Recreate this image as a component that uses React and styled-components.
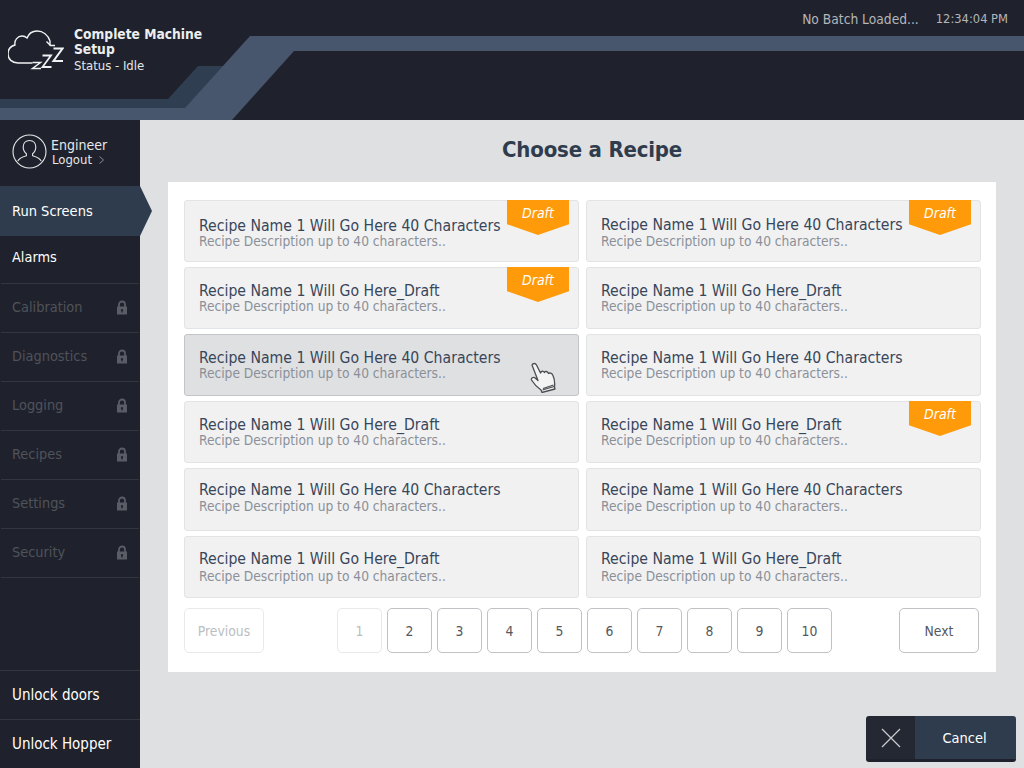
import React from 'react';
import styled, { createGlobalStyle } from 'styled-components';

const FONT = `"DejaVu Sans", sans-serif`;

const GlobalStyle = createGlobalStyle`
    html, body {
        margin: 0;
        padding: 0;
    }
    body {
        font-family: ${FONT};
        font-stretch: condensed;
        background: #dfe0e2;
    }
`;

const Screen = styled.div`
    width: 1024px;
    height: 768px;
    display: flex;
    flex-direction: column;
    overflow: hidden;
`;

const Header = styled.header`
    position: relative;
    height: 120px;
    flex: none;
    background: #1f222c;
    color: #fff;
`;

const HeaderArt = styled.svg`
    position: absolute;
    left: 0;
    top: 0;
`;

const HeaderInner = styled.div`
    position: relative;
    height: 100%;
    display: flex;
    justify-content: space-between;
    align-items: flex-start;
    padding: 0 16px 0 8px;
`;

const MachineInfo = styled.div`
    display: flex;
    align-items: flex-start;
    padding-top: 27px;
`;

const MachineText = styled.div`
    margin-left: 10px;
    width: 140px;
`;

const MachineTitle = styled.div`
    font-size: 13.7px;
    line-height: 15px;
    font-weight: bold;
    color: #eceef0;
`;

const MachineStatus = styled.div`
    font-size: 13px;
    line-height: 17px;
    color: #e4e6e8;
`;

const TopRight = styled.div`
    display: flex;
    align-items: center;
    gap: 17px;
    padding-top: 10px;
    line-height: 18px;
    color: #b4b6ba;
`;

const TopRightText = styled.span`
    font-size: ${(props) => props.size}px;
`;

const Body = styled.div`
    flex: 1;
    display: flex;
    min-height: 0;
`;

const Sidebar = styled.nav`
    width: 140px;
    flex: none;
    display: flex;
    flex-direction: column;
    background: #1f222c;
`;

const Profile = styled.div`
    height: 66px;
    display: flex;
    align-items: center;
    padding: 0 0 4px 12px;
    box-sizing: border-box;
`;

const ProfileText = styled.div`
    margin-left: 4px;
    margin-top: 2px;
`;

const ProfileName = styled.div`
    font-size: 14px;
    line-height: 15px;
    color: #e6e7e9;
`;

const ProfileLogout = styled.div`
    display: flex;
    align-items: center;
    gap: 7px;
    margin-left: 1px;
    font-size: 13px;
    line-height: 14px;
    color: #e6e7e9;
`;

const ActiveItem = styled.div`
    position: relative;
    height: 50px;
    display: flex;
    align-items: center;
    padding: 0 0 1px 12px;
    box-sizing: border-box;
    background: #2f3c4d;
    color: #fff;
    font-size: 14.5px;
    &::after {
        content: '';
        position: absolute;
        left: 140px;
        top: 0;
        border-top: 25px solid transparent;
        border-bottom: 25px solid transparent;
        border-left: 12px solid #2f3c4d;
    }
`;

const NavItem = styled.div`
    height: ${(props) => props.height || 49}px;
    box-sizing: border-box;
    display: flex;
    align-items: center;
    justify-content: space-between;
    padding: 0 11px 3px 11px;
    margin: 0 1px;
    border-bottom: 1px solid #33363f;
    font-size: 14.4px;
    color: ${(props) => (props.locked ? '#4f525a' : '#fff')};
`;

const AlarmItem = styled(NavItem)`
    padding-bottom: 5px;
`;

const BottomItem = styled(NavItem)`
    margin: 0;
    padding: 0 12px;
    border-bottom: none;
    border-top: 1px solid #33363f;
    color: #fff;
    font-size: 15px;
`;

const Lock = styled.svg`
    margin-top: 2px;
`;

const Spacer = styled.div`
    flex: 1;
`;

const Main = styled.main`
    flex: 1;
    display: flex;
    flex-direction: column;
    padding: 0 28px;
    min-width: 0;
`;

const Title = styled.h1`
    margin: 0;
    height: 62px;
    line-height: 60px;
    font-size: 22px;
    letter-spacing: -0.2px;
    font-weight: bold;
    color: #2f3c4d;
    text-align: center;
    padding-left: 20px;
`;

const Panel = styled.section`
    height: 490px;
    box-sizing: border-box;
    background: #fff;
    padding: 18px 15px 0 16px;
`;

const CardGrid = styled.div`
    display: grid;
    grid-template-columns: 395px 395px;
    grid-template-rows: 62px 62px 62px 62px 63px 62px;
    column-gap: 7px;
    row-gap: 5px;
`;

const Card = styled.div`
    position: relative;
    box-sizing: border-box;
    padding: ${(props) => props.top}px 0 0 14px;
    background: ${(props) => (props.hover ? '#dfe0e2' : '#f1f1f2')};
    border: 1px solid ${(props) => (props.hover ? '#c2c4c7' : '#e2e3e5')};
    border-radius: 3px;
`;

const CardName = styled.div`
    font-size: 15.65px;
    line-height: 17px;
    color: #38465a;
    white-space: nowrap;
`;

const CardDescription = styled.div`
    margin-top: ${(props) => props.gap || 0}px;
    font-size: 13.65px;
    line-height: 15px;
    color: #8b9098;
    white-space: nowrap;
`;

const DraftTag = styled.div`
    position: absolute;
    top: -1px;
    right: 9px;
    width: 62px;
    height: 35px;
    padding-top: 5px;
    box-sizing: border-box;
    background: #ff9a0a;
    clip-path: polygon(0 0, 100% 0, 100% 69%, 50% 100%, 0 69%);
    color: #fff;
    font-size: 14px;
    line-height: 17px;
    font-style: italic;
    text-align: center;
`;

const HandCursor = styled.svg`
    position: absolute;
    left: 345px;
    top: 27px;
`;

const Pager = styled.div`
    display: flex;
    justify-content: space-between;
    margin-top: 10px;
    padding-right: 2px;
`;

const PageNumbers = styled.div`
    display: flex;
    gap: 5px;
    margin-right: -6px;
`;

const PageButton = styled.div`
    width: ${(props) => props.width || 45}px;
    height: 45px;
    box-sizing: border-box;
    display: flex;
    align-items: center;
    justify-content: center;
    background: #fff;
    border: 1px solid ${(props) => (props.disabled ? '#e8e9ea' : '#bfc1c4')};
    border-radius: 5px;
    font-size: 13.8px;
    color: ${(props) => (props.disabled ? '#bcbec1' : '#55585e')};
`;

const Footer = styled.div`
    display: flex;
    justify-content: flex-end;
    margin: 44px -20px 0 0;
`;

const CancelButton = styled.div`
    width: 150px;
    height: 46px;
    display: flex;
    border-bottom: 3px solid #1f222c;
    box-sizing: border-box;
    border-radius: 3px;
    overflow: hidden;
    color: #fff;
    font-size: 14.5px;
`;

const CancelIcon = styled.div`
    width: 49px;
    display: flex;
    align-items: center;
    justify-content: center;
    background: #242832;
`;

const CancelLabel = styled.div`
    flex: 1;
    display: flex;
    align-items: center;
    justify-content: center;
    padding: 1px 2px 0 0;
    background: #2f3c4d;
`;

const LockIcon = () => (
    <Lock width="12" height="15" viewBox="0 0 12 15">
        <path d="M3 7V4.5a3 3 0 0 1 6 0V7" fill="none" stroke="#5a5d65" strokeWidth="1.8" />
        <path
            fillRule="evenodd"
            d="M1 6.5h10v8H1z M6 9a1.2 1.2 0 0 0-.6 2.2V12.6h1.2V11.2A1.2 1.2 0 0 0 6 9z"
            fill="#5a5d65"
        />
    </Lock>
);

const CloudIcon = () => (
    <svg width="56" height="44" viewBox="0 0 56 44" fill="none" stroke="#f0f1f2" strokeWidth="1.4">
        <path d="M24 36H10C4 36 0 32 0 27C0 22 3 19 7 18C6 13 10 9 14 9C16 9 18 10 19 11C21 6 25 4 29 4C35 4 40 8 42 14V18" strokeLinecap="round" />
        <path d="M38.5 14.5L42.5 18.5L47 18.5" />
        <polyline points="24.5,35.5 32.5,35.5 24.5,41.5 33,41.5" strokeWidth="1.5" />
        <polyline points="34.5,28.5 43,28.5 34.5,40 43.5,40" strokeWidth="1.8" />
        <polyline points="45.5,21.5 54.5,21.5 45.5,34 55,34" strokeWidth="2" />
    </svg>
);

const cards = [
    { long: true, draft: true, top: 16 },
    { long: true, draft: true, top: 15, gap: 1 },
    { long: false, draft: true, top: 14 },
    { long: false, top: 14 },
    { long: true, hover: true, top: 14 },
    { long: true, top: 14 },
    { long: false, top: 14 },
    { long: false, draft: true, top: 14 },
    { long: true, top: 12, gap: 1 },
    { long: true, top: 12, gap: 1 },
    { long: false, top: 13, gap: 2 },
    { long: false, top: 13, gap: 2 },
];

const lockedItems = ['Calibration', 'Diagnostics', 'Logging', 'Recipes', 'Settings', 'Security'];
const pages = [2, 3, 4, 5, 6, 7, 8, 9, 10];

export default function App() {
    return (
        <Screen>
            <GlobalStyle />
            <Header>
                <HeaderArt width="1024" height="120" viewBox="0 0 1024 120">
                    <polygon points="0,99 168,99 198,66 240,66 240,108 0,108" fill="#2f3e51" />
                    <polygon
                        points="0,108 185,108 250,36 1024,36 1024,51 294,51 232,120 0,120"
                        fill="#47566d"
                    />
                </HeaderArt>
                <HeaderInner>
                    <MachineInfo>
                        <CloudIcon />
                        <MachineText>
                            <MachineTitle>Complete Machine Setup</MachineTitle>
                            <MachineStatus>Status - Idle</MachineStatus>
                        </MachineText>
                    </MachineInfo>
                    <TopRight>
                        <TopRightText size={13.7}>No Batch Loaded...</TopRightText>
                        <TopRightText size={12.8}>12:34:04 PM</TopRightText>
                    </TopRight>
                </HeaderInner>
            </Header>
            <Body>
                <Sidebar>
                    <Profile>
                        <svg width="35" height="35" viewBox="0 0 35 35" fill="none" stroke="#e6e7e9" strokeWidth="1.1">
                            <circle cx="17.5" cy="17.5" r="16.5" />
                            <path d="M17.5 6.5c-4 0-6.3 3-6.3 6.6 0 2.8 1.3 5.2 3.2 6.6v2c-3.4 1-7.4 2.4-8.6 5.4M17.5 6.5c4 0 6.3 3 6.3 6.6 0 2.8-1.3 5.2-3.2 6.6v2c3.4 1 7.4 2.4 8.6 5.4" />
                        </svg>
                        <ProfileText>
                            <ProfileName>Engineer</ProfileName>
                            <ProfileLogout>
                                Logout
                                <svg width="5" height="8" viewBox="0 0 5 8" fill="none" stroke="#8b8e94" strokeWidth="1">
                                    <path d="M0.5 0.5L4.5 4L0.5 7.5" />
                                </svg>
                            </ProfileLogout>
                        </ProfileText>
                    </Profile>
                    <ActiveItem>Run Screens</ActiveItem>
                    <AlarmItem height={48}>Alarms</AlarmItem>
                    {lockedItems.map((name) => (
                        <NavItem key={name} locked>
                            {name}
                            <LockIcon />
                        </NavItem>
                    ))}
                    <Spacer />
                    <BottomItem>Unlock doors</BottomItem>
                    <BottomItem>Unlock Hopper</BottomItem>
                </Sidebar>
                <Main>
                    <Title>Choose a Recipe</Title>
                    <Panel>
                        <CardGrid>
                            {cards.map((card, i) => (
                                <Card key={i} hover={card.hover} top={card.top}>
                                    <CardName>
                                        {card.long
                                            ? 'Recipe Name 1 Will Go Here 40 Characters'
                                            : 'Recipe Name 1 Will Go Here_Draft'}
                                    </CardName>
                                    <CardDescription gap={card.gap}>
                                        Recipe Description up to 40 characters..
                                    </CardDescription>
                                    {card.draft && <DraftTag>Draft</DraftTag>}
                                    {card.hover && (
                                        <HandCursor width="28" height="31" viewBox="0 0 28 31" fill="#f3f3f3" stroke="#4a4d52" strokeWidth="1.3" strokeLinejoin="round">
                                            <path d="M2 3C3 1 5.5 1 6.5 3L10.5 11C11 9 13 8.5 14.5 10.5C15 9 17.5 9 18.5 11.5C19.5 10.5 22 11 23 13.5C24.5 17 25 21 24.5 25L25 27L12 30.5L11 28C8 26 4 22 1.5 18C1 16 3 15 4.5 15.5L8 18.5L2 3Z" />
                                            <path d="M12.5 28L24 24.5M13 26.5L23.5 23" fill="none" />
                                        </HandCursor>
                                    )}
                                </Card>
                            ))}
                        </CardGrid>
                        <Pager>
                            <PageButton width={80} disabled>Previous</PageButton>
                            <PageNumbers>
                                <PageButton disabled>1</PageButton>
                                {pages.map((page) => (
                                    <PageButton key={page}>{page}</PageButton>
                                ))}
                            </PageNumbers>
                            <PageButton width={80}>Next</PageButton>
                        </Pager>
                    </Panel>
                    <Footer>
                        <CancelButton>
                            <CancelIcon>
                                <svg width="20" height="20" viewBox="0 0 20 20" stroke="#c9cbce" strokeWidth="1.2">
                                    <path d="M1 1L19 19M19 1L1 19" />
                                </svg>
                            </CancelIcon>
                            <CancelLabel>Cancel</CancelLabel>
                        </CancelButton>
                    </Footer>
                </Main>
            </Body>
        </Screen>
    );
}
